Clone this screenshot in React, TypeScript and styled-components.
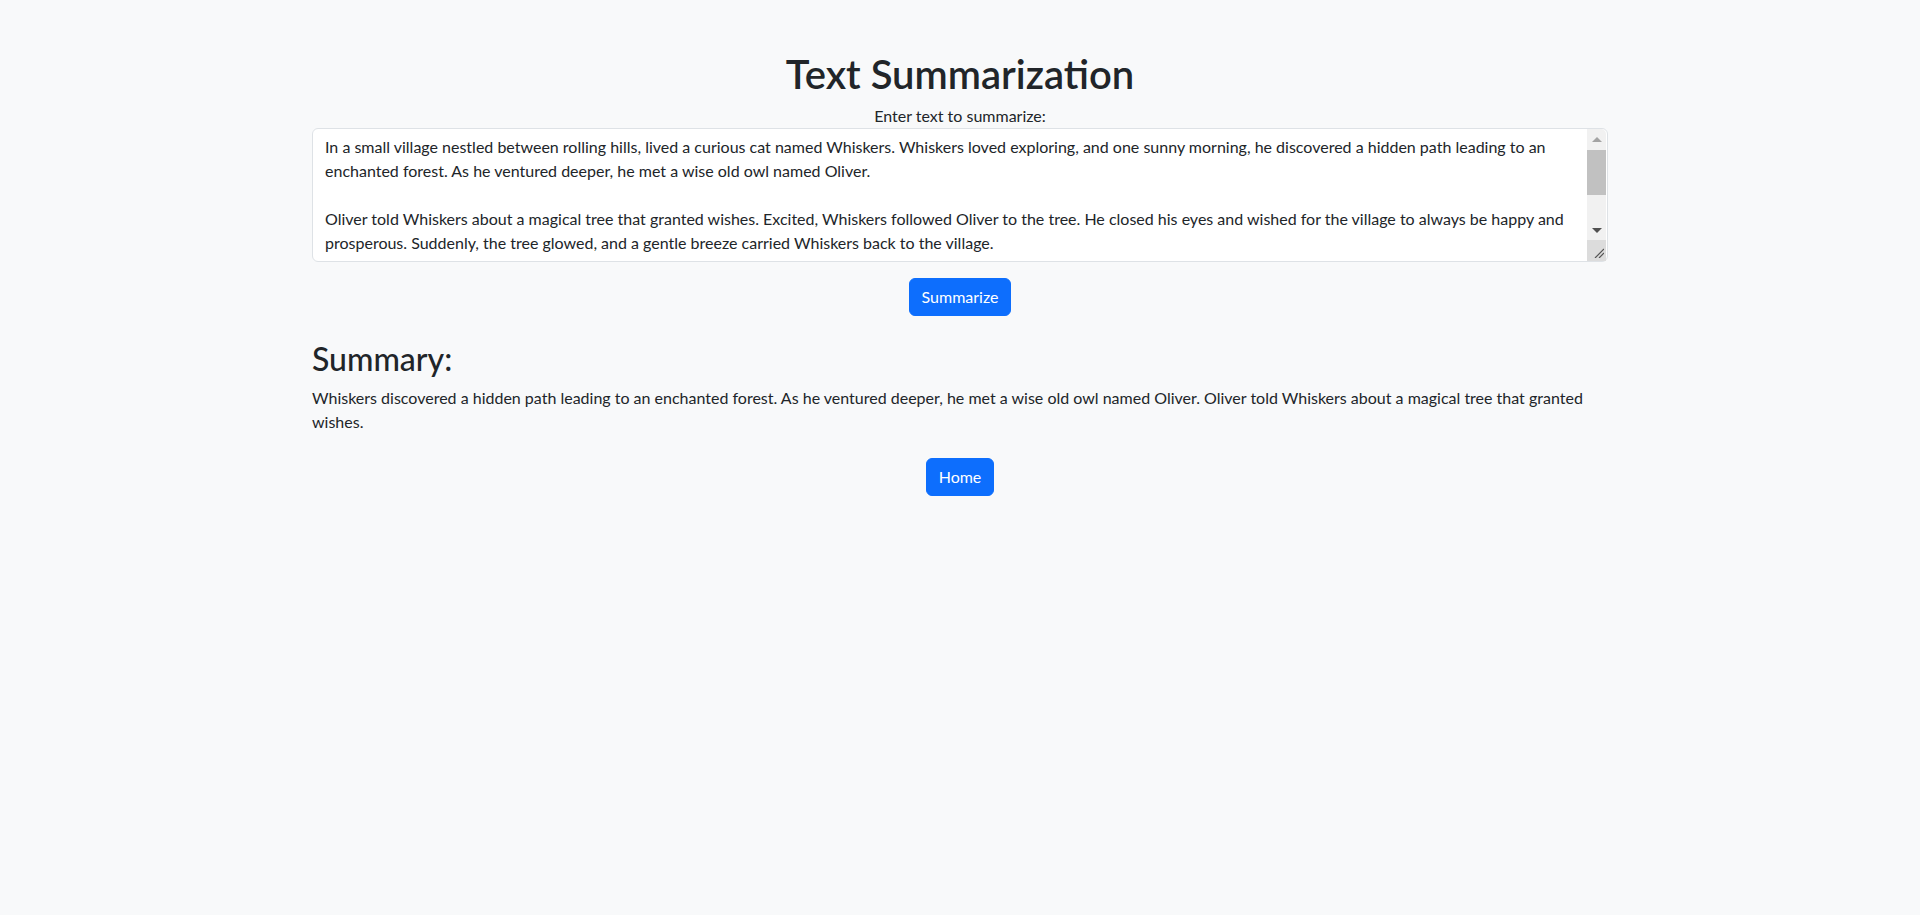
import React, { useState } from 'react';
import styled, { createGlobalStyle } from 'styled-components';

const GlobalStyle = createGlobalStyle`
  *, *::before, *::after {
    box-sizing: border-box;
  }
  body {
    margin: 0;
    background: #f8f9fa;
    color: #212529;
    font-family: 'Lato', 'Liberation Sans', sans-serif;
    font-size: 16px;
    line-height: 1.5;
  }
`;

const Container = styled.div`
  max-width: 1320px;
  margin: 50px auto 0;
  padding: 0 12px;
`;

const Title = styled.h1`
  margin: 0 0 6px;
  font-size: 40px;
  font-weight: 600;
  line-height: 1.2;
  text-align: center;
`;

const Center = styled.div`
  text-align: center;
`;

const Label = styled.label`
  display: inline-block;
  font-size: 16px;
`;

const Field = styled.div`
  position: relative;
`;

const TextArea = styled.textarea`
  display: block;
  width: 100%;
  padding: 6px 32px 6px 12px;
  font-family: inherit;
  font-size: 16px;
  line-height: 1.5;
  color: #212529;
  background: #fff;
  border: 1px solid #dee2e6;
  border-radius: 6px;
  resize: none;
  overflow: hidden;
  outline: none;
`;

// drawn scrollbar, sits over the textarea's right edge
const ScrollBar = styled.div`
  position: absolute;
  top: 1px;
  right: 2px;
  bottom: 1px;
  width: 19px;
  display: flex;
  flex-direction: column;
  background: #f1f1f1;
  border-top-right-radius: 5px;
  overflow: hidden;
`;

type ArrowProps = {
  $dir: 'up' | 'down';
  $color: string;
};

const ArrowButton = styled.div<ArrowProps>`
  height: 20px;
  flex: none;
  display: flex;
  align-items: center;
  justify-content: center;

  &::before {
    content: '';
    width: 0;
    height: 0;
    border-left: 5px solid transparent;
    border-right: 5px solid transparent;
    ${({ $dir, $color }) =>
      $dir === 'up'
        ? `border-bottom: 5px solid ${$color};`
        : `border-top: 5px solid ${$color};`}
  }
`;

const Track = styled.div`
  flex: 1;
  padding-top: 1px;
`;

const Thumb = styled.div`
  height: 45px;
  background: #c1c1c1;
`;

const Corner = styled.div`
  height: 21px;
  flex: none;
  background: #dcdcdc;
  display: flex;
  align-items: flex-end;
  justify-content: flex-end;
  padding: 0 2px 3px 0;
`;

type ButtonProps = {
  $top: number;
};

const Button = styled.button<ButtonProps>`
  margin-top: ${({ $top }) => $top}px;
  padding: 6px 12px;
  font-family: inherit;
  font-size: 16px;
  line-height: 1.5;
  color: #fff;
  background: #0d6efd;
  border: 1px solid #0d6efd;
  border-radius: 6px;
  cursor: pointer;
`;

const SubTitle = styled.h2`
  margin: 24px 0 8px;
  font-size: 32px;
  font-weight: 500;
  line-height: 1.2;
`;

const Summary = styled.p`
  margin: 0 0 24px;
  font-size: 16px;
`;

const story = `In a small village nestled between rolling hills, lived a curious cat named Whiskers. Whiskers loved exploring, and one sunny morning, he discovered a hidden path leading to an enchanted forest. As he ventured deeper, he met a wise old owl named Oliver.

Oliver told Whiskers about a magical tree that granted wishes. Excited, Whiskers followed Oliver to the tree. He closed his eyes and wished for the village to always be happy and prosperous. Suddenly, the tree glowed, and a gentle breeze carried Whiskers back to the village.

From that day on, the village flourished, and everyone lived happily ever after. Whiskers never forgot his adventure in the enchanted forest, and he often visited Oliver to share stories and dream of new adventures.`;

const App = () => {
  const [text, setText] = useState(story);

  return (
    <>
      <GlobalStyle />
      <Container>
        <Title>Text Summarization</Title>
        <Center>
          <Label htmlFor='text'>Enter text to summarize:</Label>
        </Center>
        <Field>
          <TextArea
            id='text'
            rows={5}
            value={text}
            onChange={(e) => setText(e.target.value)}
          />
          <ScrollBar aria-hidden>
            <ArrowButton $dir='up' $color='#a3a3a3' />
            <Track>
              <Thumb />
            </Track>
            <ArrowButton $dir='down' $color='#505050' />
            <Corner>
              <svg width='10' height='10' viewBox='0 0 10 10'>
                <path d='M1 10L10 1M5 10L10 5' stroke='#555' strokeWidth='1.2' />
              </svg>
            </Corner>
          </ScrollBar>
        </Field>
        <Center>
          <Button $top={16}>Summarize</Button>
        </Center>
        <SubTitle>Summary:</SubTitle>
        <Summary>
          Whiskers discovered a hidden path leading to an enchanted forest. As
          he ventured deeper, he met a wise old owl named Oliver. Oliver told
          Whiskers about a magical tree that granted wishes.
        </Summary>
        <Center>
          <Button $top={0}>Home</Button>
        </Center>
      </Container>
    </>
  );
};

export default App;
